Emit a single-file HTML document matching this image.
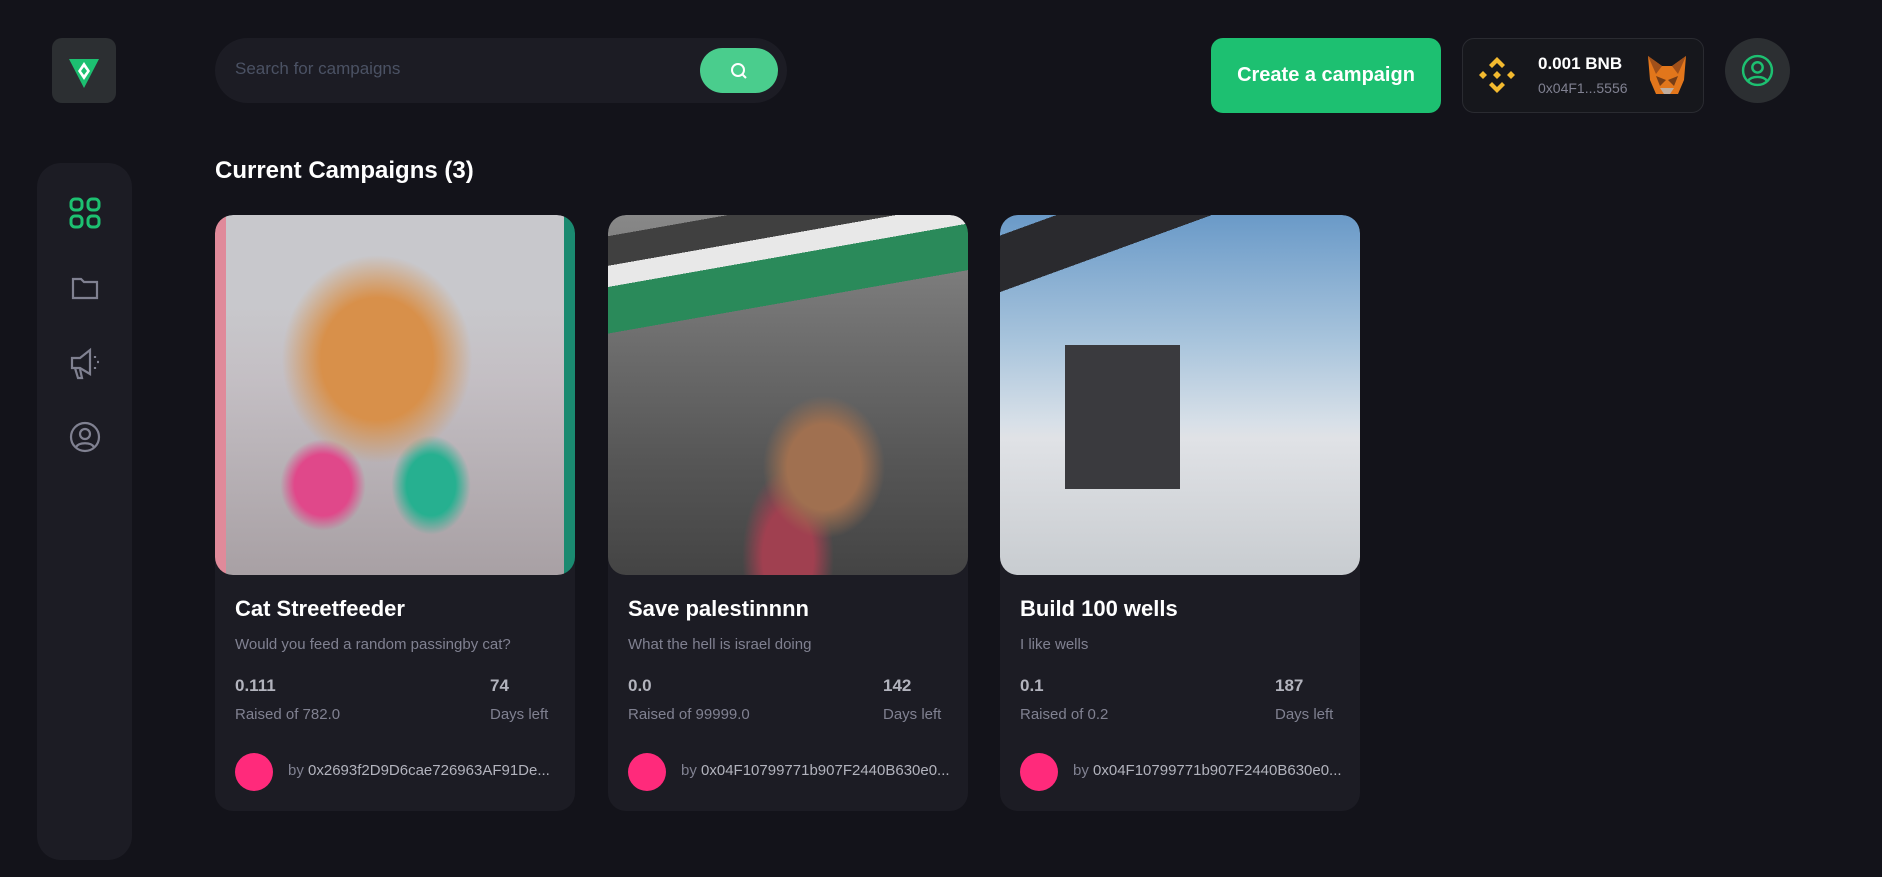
<!DOCTYPE html>
<html><head><meta charset="utf-8"><style>
*{box-sizing:border-box;margin:0;padding:0}
body{width:1882px;height:877px;background:#13131a;font-family:"Liberation Sans",sans-serif;position:relative;overflow:hidden;color:#fff}
.abs{position:absolute}
.card{position:absolute;top:215px;width:360px;height:596px;background:#1c1c24;border-radius:18px;overflow:hidden}
.img{height:360px;border-radius:18px;overflow:hidden;position:relative}
.t{position:absolute;left:20px;top:381px;font-size:22px;font-weight:bold;color:#fff}
.d{position:absolute;left:20px;font-size:15px;color:#808191}
.v{position:absolute;top:461px;font-size:17px;font-weight:bold;color:#b2b3bd}
.l{position:absolute;top:491px;font-size:15px;color:#808191}
.av{position:absolute;left:20px;top:538px;width:38px;height:38px;border-radius:50%;background:#ff2a7b}
.by{position:absolute;left:73px;top:547px;font-size:15px;color:#808191}
.by b{font-weight:normal;color:#b2b3bd}
</style></head><body>
<div class="abs" style="left:52px;top:38px;width:64px;height:65px;background:#2c2f32;border-radius:10px">
<svg width="64" height="65" viewBox="0 0 64 65"><polygon points="17,21 47,21 32,50" fill="#1dc071"/><polygon points="32,24 38,33 32,42 26,33" fill="#fff"/><polygon points="32,29 35,33 32,37 29,33" fill="#1dc071"/></svg></div>
<div class="abs" style="left:37px;top:163px;width:95px;height:697px;background:#1c1c24;border-radius:24px"></div>
<svg class="abs" style="left:69px;top:197px" width="32" height="32" viewBox="0 0 32 32" fill="none" stroke="#1dc071" stroke-width="3"><rect x="2" y="2" width="11" height="11" rx="4"/><rect x="19" y="2" width="11" height="11" rx="4"/><rect x="2" y="19" width="11" height="11" rx="4"/><rect x="19" y="19" width="11" height="11" rx="4"/></svg>
<svg class="abs" style="left:70px;top:274px" width="30" height="28" viewBox="0 0 30 28" fill="none" stroke="#808191" stroke-width="2.2"><path d="M3 5h8l3 3h13v16H3z"/></svg>
<svg class="abs" style="left:69px;top:346px" width="32" height="34" viewBox="0 0 32 34" fill="none" stroke="#808191" stroke-width="2.2"><path d="M3 12h8l10-8v24l-10-6H3z"/><path d="M6 22l3 10h4l-2-9"/><path d="M26 10v2M28 16h2M26 21v2"/></svg>
<svg class="abs" style="left:69px;top:421px" width="32" height="32" viewBox="0 0 32 32" fill="none" stroke="#808191" stroke-width="2.2"><circle cx="16" cy="16" r="14"/><circle cx="16" cy="13" r="5"/><path d="M7 26c3-5 15-5 18 0"/></svg>
<div class="abs" style="left:215px;top:38px;width:572px;height:65px;background:#1c1c24;border-radius:33px"></div>
<div class="abs" style="left:235px;top:59px;font-size:17px;color:#4b5264">Search for campaigns</div>
<div class="abs" style="left:700px;top:48px;width:78px;height:45px;background:#4acd8d;border-radius:23px"><svg style="position:absolute;left:29px;top:13px" width="20" height="20" viewBox="0 0 20 20" fill="none" stroke="#fff" stroke-width="2"><circle cx="9" cy="9" r="6"/><path d="M13 13l4 4"/></svg></div>
<div class="abs" style="left:1211px;top:38px;width:230px;height:75px;background:#1dc071;border-radius:12px;font-size:20px;font-weight:bold;line-height:75px;text-align:center">Create a campaign</div>
<div class="abs" style="left:1462px;top:38px;width:242px;height:75px;background:#16171c;border:1px solid #2a2b31;border-radius:12px"></div>
<svg class="abs" style="left:1476px;top:54px" width="42" height="42" viewBox="0 0 42 42" fill="#f3ba2f"><path d="M21 3l8 8-3 3-5-5-5 5-3-3z"/><path d="M21 39l8-8-3-3-5 5-5-5-3 3z"/><path d="M3 21l4-4 4 4-4 4z"/><path d="M31 21l4-4 4 4-4 4z"/><path d="M21 17l4 4-4 4-4-4z"/></svg>
<div class="abs" style="left:1538px;top:54px;font-size:17px;font-weight:bold">0.001 BNB</div>
<div class="abs" style="left:1538px;top:80px;font-size:14px;color:#808191">0x04F1...5556</div>
<svg class="abs" style="left:1646px;top:54px" width="42" height="44" viewBox="0 0 42 44"><polygon points="2,2 16,12 26,12 40,2 38,26 32,40 10,40 4,26" fill="#e2761b"/><polygon points="10,22 20,26 14,32" fill="#763d16"/><polygon points="32,22 22,26 28,32" fill="#763d16"/><polygon points="14,34 28,34 24,40 18,40" fill="#c0ad9e"/><polygon points="2,2 16,12 10,20" fill="#a0501a"/><polygon points="40,2 26,12 32,20" fill="#a0501a"/></svg>
<div class="abs" style="left:1725px;top:38px;width:65px;height:65px;background:#2c2f32;border-radius:50%"><svg style="position:absolute;left:16px;top:16px" width="33" height="33" viewBox="0 0 32 32" fill="none" stroke="#1dc071" stroke-width="2.4"><circle cx="16" cy="16" r="14"/><circle cx="16" cy="13" r="5"/><path d="M7 26c3-5 15-5 18 0"/></svg></div>
<div class="abs" style="left:215px;top:157px;font-size:24px;font-weight:bold">Current Campaigns (3)</div>

<div class="card" style="left:215px"><div class="img" style="background:linear-gradient(90deg,#e08a9a 0 3%,transparent 3% 97%,#1a8a70 97%),radial-gradient(ellipse at 45% 40%,#d8904a 0 20%,transparent 34%),radial-gradient(ellipse at 30% 75%,#e0488a 0 8%,transparent 12%),radial-gradient(ellipse at 60% 75%,#26b090 0 8%,transparent 13%),linear-gradient(180deg,#c8c8cc 0 25%,#c4bfc4 45%,#a8a0a4 100%)"></div>
<div class="t">Cat Streetfeeder</div><div class="d" style="top:421px">Would you feed a random passingby cat?</div>
<div class="v" style="left:20px">0.111</div><div class="v" style="left:275px">74</div>
<div class="l" style="left:20px">Raised of 782.0</div><div class="l" style="left:275px">Days left</div>
<div class="av"></div><div class="by">by <b>0x2693f2D9D6cae726963AF91De...</b></div></div>

<div class="card" style="left:608px"><div class="img" style="background:linear-gradient(170deg,transparent 0 5%,#404040 5% 12%,#e8e8e8 12% 17%,#2a8a5a 17% 28%,transparent 28%),radial-gradient(ellipse at 60% 70%,#a07050 0 12%,transparent 20%),radial-gradient(ellipse at 50% 95%,#a04050 0 10%,transparent 18%),linear-gradient(180deg,#888 0%,#6a6a6a 40%,#555 70%,#444 100%)"></div>
<div class="t">Save palestinnnn</div><div class="d" style="top:421px">What the hell is israel doing</div>
<div class="v" style="left:20px">0.0</div><div class="v" style="left:275px">142</div>
<div class="l" style="left:20px">Raised of 99999.0</div><div class="l" style="left:275px">Days left</div>
<div class="av"></div><div class="by">by <b>0x04F10799771b907F2440B630e0...</b></div></div>

<div class="card" style="left:1000px"><div class="img" style="background:linear-gradient(90deg,transparent 0 18%,#3a3a3e 18% 50%,transparent 50%) 0 60%/100% 40% no-repeat,linear-gradient(160deg,transparent 0 8%,#2a2a2e 8% 30%,transparent 30%) 0 0/100% 35% no-repeat,linear-gradient(180deg,#6a9ac8 0%,#a8c4dc 35%,#d8e0e8 58%,#e0e2e6 62%,#c8ccd0 100%)"></div>
<div class="t">Build 100 wells</div><div class="d" style="top:421px">I like wells</div>
<div class="v" style="left:20px">0.1</div><div class="v" style="left:275px">187</div>
<div class="l" style="left:20px">Raised of 0.2</div><div class="l" style="left:275px">Days left</div>
<div class="av"></div><div class="by">by <b>0x04F10799771b907F2440B630e0...</b></div></div>
</body></html>
